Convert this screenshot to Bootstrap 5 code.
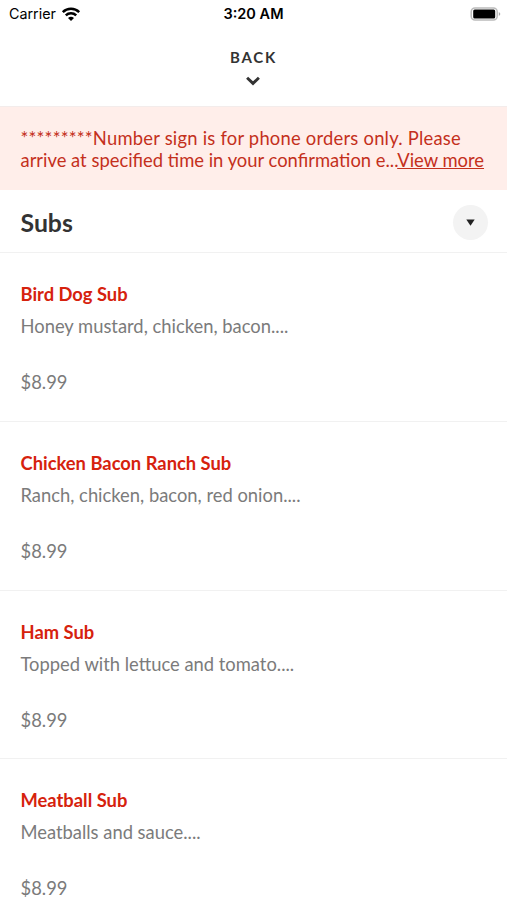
<!DOCTYPE html>
<html lang="en">
<head>
<meta charset="utf-8">
<meta name="viewport" content="width=device-width, initial-scale=1">
<title>Subs menu</title>
<link href="https://cdn.jsdelivr.net/npm/bootstrap@5.3.0/dist/css/bootstrap.min.css" rel="stylesheet">
<style>
body{font-family:Lato,sans-serif;height:900px;color:#333}
.status-bar{height:28px;font:14.3px/28px Inter,sans-serif;padding:0 6px 0 9px}
.status-bar .side{flex:1 1 0}
.status-bar .clock{font-weight:600;font-size:14.5px;margin-right:3px}
.wifi{margin-left:5px}
.back-bar{height:79px;padding-top:18px;border-bottom:1px solid #f3eceb}
.back-label{font-size:15px;line-height:22px;font-weight:700;letter-spacing:1.8px}
.back-bar svg{margin:8px 1px 0 0}
.notice{height:83px;background:#ffeeea;color:#c4301c;font-size:18.4px;line-height:22px;padding:20px 20px 0 20.5px;white-space:nowrap}
.notice .lead-line{letter-spacing:.22px}
.notice a{color:inherit}
.section-head{height:63px;padding:3px 19px 0 20.5px;border-bottom:1px solid #f1f1f1}
.section-head h1{font-size:24.8px;font-weight:700;padding-top:1px}
.toggle-btn{width:35px;height:35px;background:#f3f3f3}
.menu-item{height:168.6px;padding:28px 20.5px 0;border-bottom:1px solid #f1f1f1;font-size:18.37px;line-height:26px;color:#7b7b7b}
.menu-item:nth-of-type(2){height:169px}
.menu-item h2{font-size:18.35px;line-height:26px;color:#d6220d;font-weight:700;margin-bottom:6px}
.menu-item p{margin-bottom:30px}
</style>
</head>
<body class="bg-white overflow-hidden">
<header>
<div class="status-bar d-flex align-items-center text-black">
<div class="side d-flex align-items-center"><span>Carrier</span>
<svg class="wifi" width="20" height="15" viewBox="0 0 20 15" fill="none" stroke="#000" stroke-width="2.5"><path d="M1.8 5.1a11.7 11.7 0 0 1 16.4 0M4.8 8.4a7.4 7.4 0 0 1 10.4 0"/><path d="M10 14 7 11.1a4.3 4.3 0 0 1 6 0z" fill="#000" stroke="none"/></svg></div>
<span class="clock">3:20 AM</span>
<div class="side d-flex justify-content-end"><svg width="31" height="15" viewBox="0 0 31 15"><rect x="1.2" y="1" width="26" height="12" rx="3.8" fill="#fff" stroke="#bbb" stroke-width="1.5"/><rect x="3.2" y="2.6" width="22" height="8.8" rx="1.5"/><path d="M28.8 4.9q3 2.1 0 4.2z" fill="#aaa"/></svg></div></div>
<div class="back-bar d-flex flex-column align-items-center"><span class="back-label">BACK</span>
<svg width="14" height="10" viewBox="0 0 14 10" fill="none" stroke="#333" stroke-width="2.9"><path d="M1.1 1.7 7 7.4l5.9-5.7"/></svg></div>
</header>
<main>
<div class="notice"><div class="lead-line">*********Number sign is for phone orders only. Please</div><div>arrive at specified time in your confirmation e...<a href="#">View more</a></div></div>
<div class="section-head d-flex justify-content-between align-items-center"><h1 class="mb-0">Subs</h1><button class="toggle-btn btn border-0 rounded-circle p-0 d-flex align-items-center justify-content-center" aria-label="Toggle section"><svg width="9" height="7" viewBox="0 0 9 7"><path d="M.3.5h8.4L4.5 6.7z" fill="#222"/></svg></button></div>
<article class="menu-item"><h2>Bird Dog Sub</h2><p>Honey mustard, chicken, bacon....</p><div>$8.99</div></article>
<article class="menu-item"><h2>Chicken Bacon Ranch Sub</h2><p>Ranch, chicken, bacon, red onion....</p><div>$8.99</div></article>
<article class="menu-item"><h2>Ham Sub</h2><p>Topped with lettuce and tomato....</p><div>$8.99</div></article>
<article class="menu-item"><h2>Meatball Sub</h2><p>Meatballs and sauce....</p><div>$8.99</div></article>
</main>
<script src="https://cdn.jsdelivr.net/npm/bootstrap@5.3.0/dist/js/bootstrap.bundle.min.js"></script>
</body>
</html>
